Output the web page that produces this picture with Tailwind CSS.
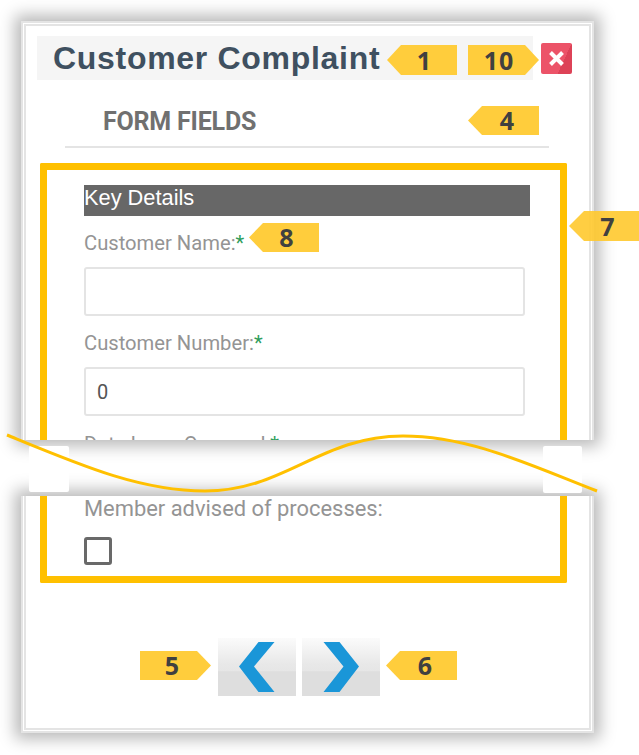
<!DOCTYPE html>
<html>
<head>
<meta charset="utf-8">
<script src="https://cdn.jsdelivr.net/npm/@tailwindcss/browser@4"></script>
</head>
<body class="bg-white">
<div class="relative w-[639px] h-[755px] overflow-hidden bg-white pt-[21px] pl-[21px] font-['Roboto',sans-serif]">

  <!-- upper part of the panel -->
  <section class="w-[573px] h-[419px] overflow-hidden bg-white border-[5px] border-b-0 border-double border-[#e4e4e4] shadow-[0_0_15px_6px_rgba(0,0,0,0.28)] relative">
    <div class="flex items-start pt-[10px] pl-[11px]">
      <div class="w-[496px] h-[44px] bg-[#f5f5f5] pl-[16px] flex items-center">
        <h1 class="font-['Liberation_Sans',sans-serif] font-bold text-[32px] leading-none tracking-[0.7px] text-[#3f5060]">Customer Complaint</h1>
      </div>
      <button class="ml-[8px] mt-[7px] w-[31px] h-[31px] rounded-[2px] bg-[linear-gradient(115deg,#ec5368_68%,#dd4257_68%)] flex items-center justify-center">
        <svg width="17" height="17" viewBox="0 0 17 17"><path d="M2.5 2.5 L14.5 14.5 M14.5 2.5 L2.5 14.5" stroke="#fff" stroke-width="4"/></svg>
      </button>
    </div>
    <div class="ml-[39px] w-[484px] h-[68px] border-b-2 border-[#e4e4e4] pl-[38px] pt-[28px]">
      <h2 class="font-bold text-[25px] leading-[28px] tracking-[-0.2px] text-[#707070]">FORM FIELDS</h2>
    </div>
    <div class="ml-[14px] mt-[15px] w-[527px] h-[300px] border-[7px] border-b-0 border-[#ffc000] rounded-t-[2px] pl-[37px] pt-[15px]">
      <div class="w-[446px] h-[31px] bg-[#676767] text-white font-['Liberation_Sans',sans-serif] text-[21.8px] leading-[26px]">Key Details</div>
      <label class="block mt-[15px] text-[20.2px] leading-[24px] text-[#949494]">Customer Name:<span class="text-[#2e9e5b]">*</span></label>
      <div class="mt-[12px] w-[441px] h-[49px] border-2 border-[#e4e4e4] rounded-[3px] bg-white"></div>
      <label class="block mt-[15px] text-[20.2px] leading-[24px] text-[#949494]">Customer Number:<span class="text-[#2e9e5b]">*</span></label>
      <div class="mt-[12px] w-[441px] h-[49px] border-2 border-[#e4e4e4] rounded-[3px] bg-white pl-[11px] text-[20px] leading-[46px] text-[#555]">0</div>
      <label class="block mt-[16px] text-[20.2px] leading-[24px] text-[#949494]">Date Issue Occurred:<span class="text-[#2e9e5b]">*</span></label>
    </div>
  </section>

  <!-- lower part of the panel -->
  <section class="mt-[56px] w-[573px] h-[237px] bg-white border-[5px] border-t-0 border-double border-[#e4e4e4] shadow-[0_0_15px_6px_rgba(0,0,0,0.28)]">
    <div class="ml-[14px] w-[527px] h-[87px] border-[7px] border-t-0 border-[#ffc000] rounded-b-[2px] pl-[37px]">
      <label class="block pt-[1px] text-[21.9px] leading-[24px] text-[#949494]">Member advised of processes:</label>
      <div class="mt-[16px] w-[28px] h-[28px] border-[3px] border-[#696969] rounded-[3px]"></div>
    </div>
    <div class="flex gap-[6px] mt-[55px] pl-[192px]">
      <button class="w-[78px] h-[58px] bg-[linear-gradient(#fbfbfb,#e8e8e8_45%,#e6e6e6_57%,#dedede_58%,#dedede)] flex items-center justify-center">
        <svg width="36" height="50" viewBox="0 0 36 50"><polygon points="19.5,0 35.5,0 15,24.5 35.5,50 19.5,50 0,24.5" fill="#1a96d8"/></svg>
      </button>
      <button class="w-[78px] h-[58px] bg-[linear-gradient(#fbfbfb,#e8e8e8_45%,#e6e6e6_57%,#dedede_58%,#dedede)] flex items-center justify-center">
        <svg width="36" height="50" viewBox="0 0 36 50"><polygon points="0.5,0 16.5,0 36,24.5 16.5,50 0.5,50 20.5,24.5" fill="#1a96d8"/></svg>
      </button>
    </div>
  </section>

  <!-- tear mark overlay -->
  <div class="absolute left-[29px] top-[446px] w-[40px] h-[46px] rounded-[2px] bg-white"></div>
  <div class="absolute left-[543px] top-[446px] w-[39px] h-[47px] rounded-[2px] bg-white"></div>
  <svg class="absolute left-0 top-0" width="639" height="755" viewBox="0 0 639 755" fill="none">
    <path d="M7 435 C 80 465, 140 491, 205 491 C 285 491, 320 436, 403 436 C 470 436, 530 465, 597 491" stroke="#ffc000" stroke-width="3"/>
  </svg>

  <!-- callout badges -->
  <span class="absolute left-[387px] top-[45px] w-[70px] h-[30px] bg-[#ffcd3c] [clip-path:polygon(0_50%,14px_0,100%_0,100%_100%,14px_100%)] flex items-center justify-center pl-[4px] font-['Open_Sans',sans-serif] font-bold text-[25px] leading-none text-[#404040]">1</span>
  <span class="absolute left-[468px] top-[45px] w-[71px] h-[30px] bg-[#ffcd3c] [clip-path:polygon(0_0,calc(100%-14px)_0,100%_50%,calc(100%-14px)_100%,0_100%)] flex items-center justify-center pr-[9px] font-['Open_Sans',sans-serif] font-bold text-[25px] tracking-[1px] leading-none text-[#404040]">10</span>
  <span class="absolute left-[468px] top-[106px] w-[71px] h-[29px] bg-[#ffcd3c] [clip-path:polygon(0_50%,14px_0,100%_0,100%_100%,14px_100%)] flex items-center justify-center pl-[7px] font-['Open_Sans',sans-serif] font-bold text-[25px] leading-none text-[#404040]">4</span>
  <span class="absolute left-[569px] top-[211px] w-[70px] h-[30px] bg-[#ffc92e]/90 [clip-path:polygon(0_50%,15px_0,100%_0,100%_100%,15px_100%)] flex items-center justify-center pl-[7px] font-['Open_Sans',sans-serif] font-bold text-[25px] leading-none text-[#404040]">7</span>
  <span class="absolute left-[249px] top-[223px] w-[70px] h-[29px] bg-[#ffcd3c] [clip-path:polygon(0_50%,14px_0,100%_0,100%_100%,14px_100%)] flex items-center justify-center pl-[5px] font-['Open_Sans',sans-serif] font-bold text-[25px] leading-none text-[#404040]">8</span>
  <span class="absolute left-[140px] top-[651px] w-[71px] h-[29px] bg-[#ffcd3c] [clip-path:polygon(0_0,calc(100%-14px)_0,100%_50%,calc(100%-14px)_100%,0_100%)] flex items-center justify-center pr-[7px] font-['Open_Sans',sans-serif] font-bold text-[25px] leading-none text-[#404040]">5</span>
  <span class="absolute left-[386px] top-[651px] w-[71px] h-[29px] bg-[#ffcd3c] [clip-path:polygon(0_50%,14px_0,100%_0,100%_100%,14px_100%)] flex items-center justify-center pl-[7px] font-['Open_Sans',sans-serif] font-bold text-[25px] leading-none text-[#404040]">6</span>
</div>
</body>
</html>
